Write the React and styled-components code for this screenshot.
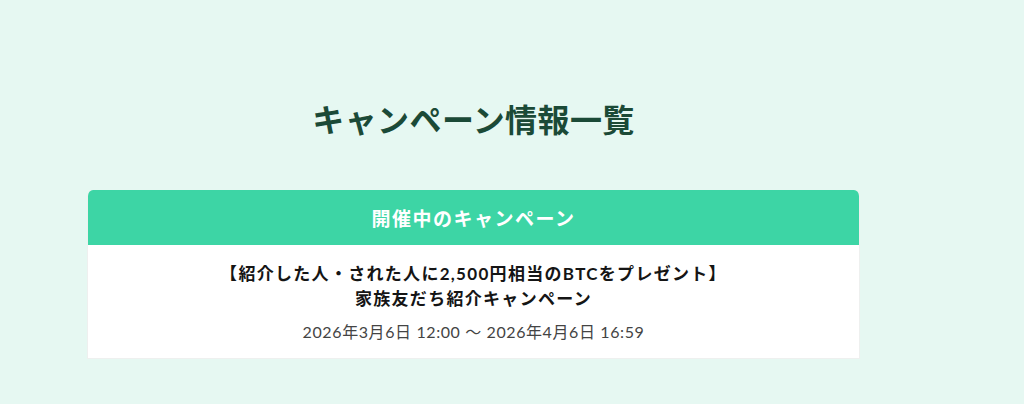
import React from "react";
import styled, { createGlobalStyle } from "styled-components";

const GlobalStyle = createGlobalStyle`
  html, body {
    margin: 0;
    background: #e6f8f2;
    font-family: Lato, "Noto Sans CJK JP", sans-serif;
  }
`;

const Page = styled.main`
  padding: 96px 164px 40px 87px;
  display: flex;
  flex-direction: column;
  align-items: center;
`;

const Title = styled.h1`
  margin: 0 0 46px;
  font-size: 32px;
  line-height: 48px;
  font-weight: 700;
  color: #1b4a37;
  letter-spacing: 0.4px;
`;

const Card = styled.section`
  width: 100%;
  border-radius: 6px 6px 0 0;
  overflow: hidden;
  background: #fff;
  border: 1px solid #eef0ef;
  border-top: none;
  box-sizing: border-box;
`;

const CardHeader = styled.h2`
  margin: 0;
  height: 55px;
  display: flex;
  align-items: center;
  justify-content: center;
  background: #3dd5a5;
  color: #fff;
  font-size: 19px;
  font-weight: 700;
  letter-spacing: 1.5px;
`;

const Entry = styled.a`
  display: flex;
  flex-direction: column;
  align-items: center;
  padding: 16px 20px 15px;
  text-decoration: none;
`;

const EntryName = styled.p`
  margin: 0;
  font-size: 17px;
  line-height: 25px;
  font-weight: 700;
  color: #151515;
  text-align: center;
  letter-spacing: 1.3px;
`;

const EntryDate = styled.p`
  margin: 10px 0 0;
  font-size: 16px;
  line-height: 22px;
  color: #444;
  letter-spacing: 0.6px;
`;

export default function App() {
  return (
    <>
      <GlobalStyle />
      <Page>
        <Title>キャンペーン情報一覧</Title>
        <Card>
          <CardHeader>開催中のキャンペーン</CardHeader>
          <Entry href="#">
            <EntryName>
              【紹介した人・された人に2,500円相当のBTCをプレゼント】
              <br />
              家族友だち紹介キャンペーン
            </EntryName>
            <EntryDate>2026年3月6日 12:00 〜 2026年4月6日 16:59</EntryDate>
          </Entry>
        </Card>
      </Page>
    </>
  );
}
